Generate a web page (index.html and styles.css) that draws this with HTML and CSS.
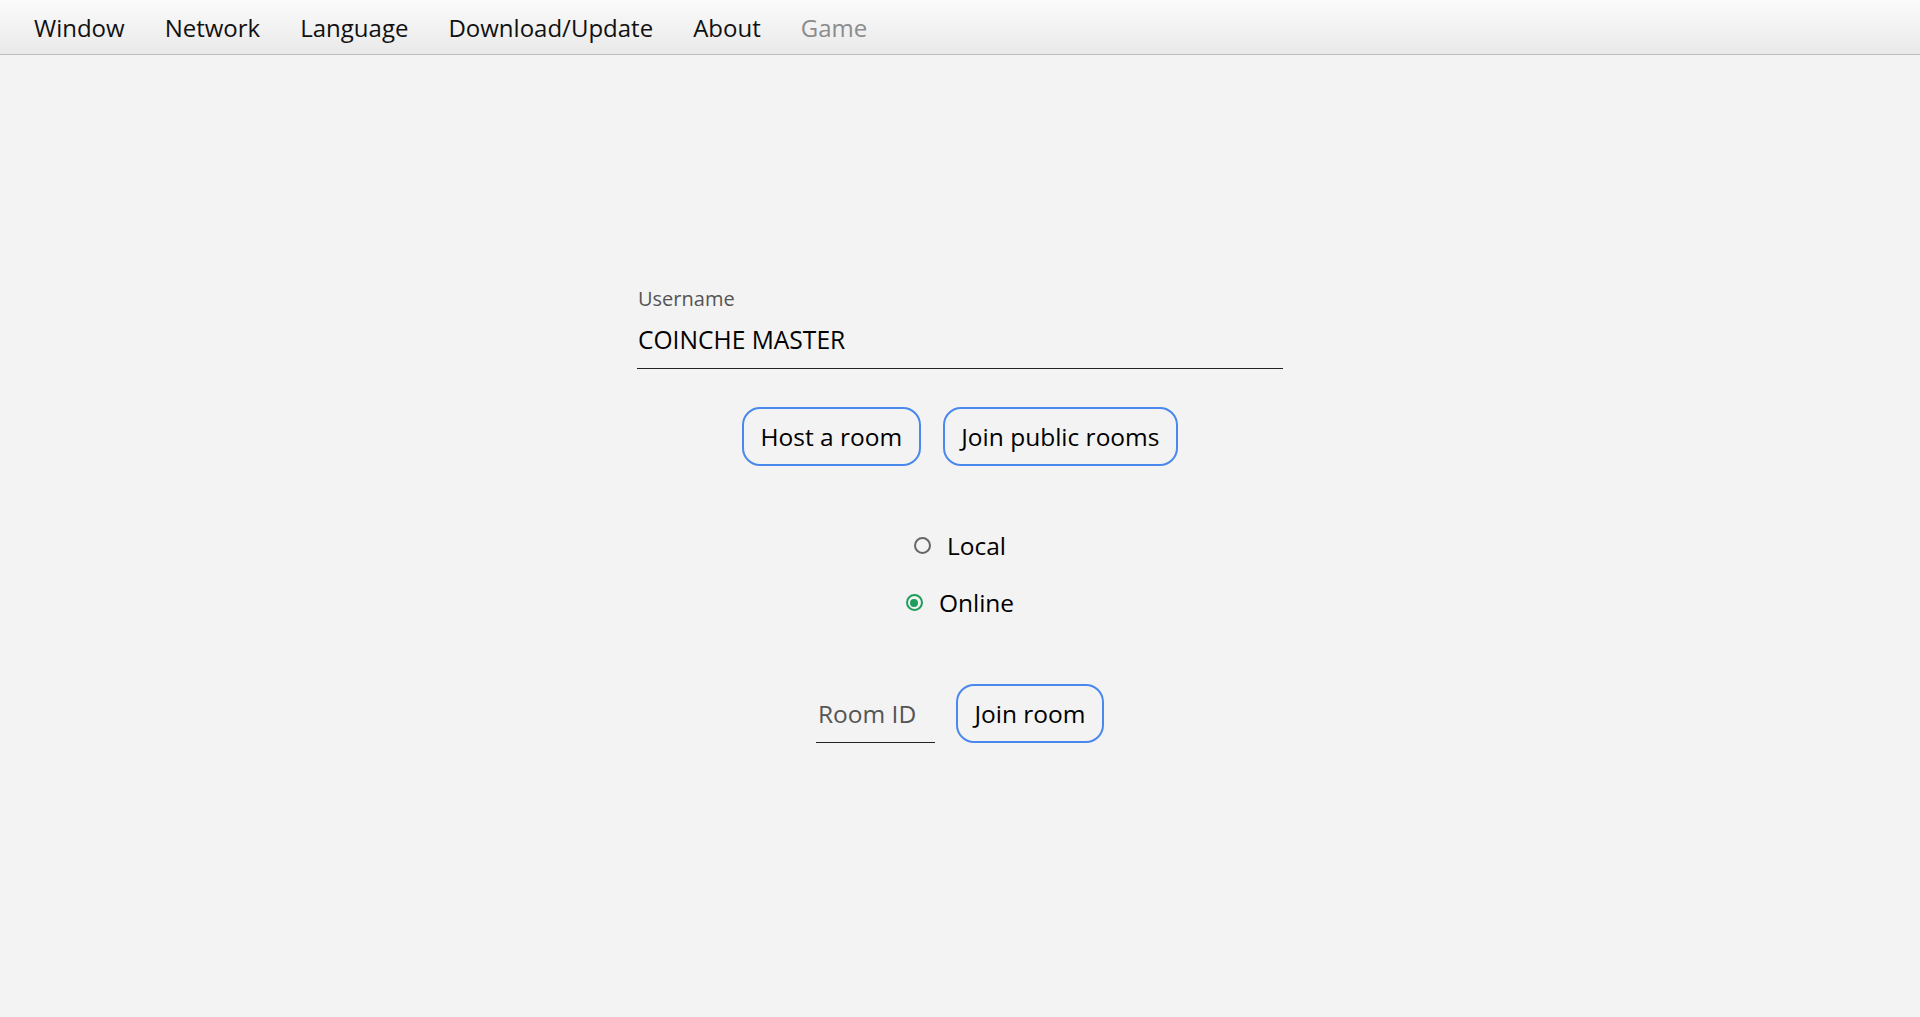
FILE: index.html
```html
<!DOCTYPE html>
<html lang="en">
<head>
<meta charset="utf-8">
<title>Coinche</title>
<link rel="stylesheet" href="styles.css">
</head>
<body>
<nav class="menubar">
  <span class="menu-item">Window</span>
  <span class="menu-item">Network</span>
  <span class="menu-item">Language</span>
  <span class="menu-item">Download/Update</span>
  <span class="menu-item">About</span>
  <span class="menu-item disabled">Game</span>
</nav>
<main class="main">
  <div class="field">
    <label class="field-label" for="username">Username</label>
    <input class="field-input" id="username" type="text" value="COINCHE MASTER">
  </div>
  <div class="btn-row">
    <button class="btn">Host a room</button>
    <button class="btn">Join public rooms</button>
  </div>
  <div class="radios">
    <div class="radio-row"><span class="radio"></span><span class="radio-text">Local</span></div>
    <div class="radio-row"><span class="radio checked"></span><span class="radio-text">Online</span></div>
  </div>
  <div class="room-row">
    <input class="room-input" type="text" placeholder="Room ID">
    <button class="btn">Join room</button>
  </div>
</main>
</body>
</html>
```
FILE: styles.css
```css
html, body {
  margin: 0;
  padding: 0;
  background: #f3f3f3;
  font-family: "Open Sans", "Noto Sans", sans-serif;
  color: #000;
}
.menubar {
  display: flex;
  gap: 40px;
  height: 52px;
  padding-top: 2px;
  padding-left: 34px;
  background: linear-gradient(#fbfbfb, #e9e9e9);
  border-bottom: 1px solid #bcbcbc;
  font-size: 24px;
  line-height: 52px;
}
.menu-item { color: #111; }
.menu-item.disabled { color: #8c8c8c; }
.main {
  display: flex;
  flex-direction: column;
  align-items: center;
}
.field {
  width: 646px;
  margin-top: 230px;
  display: flex;
  flex-direction: column;
}
.field-label {
  font-size: 20px;
  line-height: 27px;
  color: #555;
  padding-left: 1px;
}
.field-input {
  margin-top: 11px;
  font-family: inherit;
  font-size: 24.6px;
  line-height: 33px;
  height: 33px;
  padding: 0 1px 12px;
  border: none;
  border-bottom: 1.5px solid #222;
  background: transparent;
  color: #000;
  outline: none;
}
.btn-row {
  display: flex;
  gap: 22px;
  margin-top: 38px;
}
.btn {
  font-family: inherit;
  font-size: 24.5px;
  line-height: 33px;
  height: 59px;
  padding: 0 16.5px;
  border: 2px solid #4a88ee;
  border-radius: 18px;
  background: transparent;
  color: #000;
}
.radios {
  display: flex;
  flex-direction: column;
  align-items: center;
  gap: 24px;
  margin-top: 63px;
}
.radio-row {
  display: flex;
  align-items: center;
  gap: 16px;
  font-size: 24.5px;
  line-height: 33px;
}
.radio {
  width: 13px;
  height: 13px;
  border: 2px solid #666;
  border-radius: 50%;
  box-sizing: content-box;
  position: relative;
}
.radio.checked {
  border-color: #1f9d5a;
}
.radio.checked::after {
  content: "";
  position: absolute;
  left: 2.5px;
  top: 2.5px;
  width: 8px;
  height: 8px;
  border-radius: 50%;
  background: #1f9d5a;
}
.room-row {
  display: flex;
  align-items: flex-end;
  gap: 21px;
  margin-top: 65px;
}
.room-input {
  width: 117px;
  font-family: inherit;
  font-size: 24.5px;
  line-height: 33px;
  height: 33px;
  padding: 0 0 12px 2px;
  border: none;
  border-bottom: 1.5px solid #222;
  background: transparent;
  outline: none;
}
.room-input::placeholder { color: #555; }
```
